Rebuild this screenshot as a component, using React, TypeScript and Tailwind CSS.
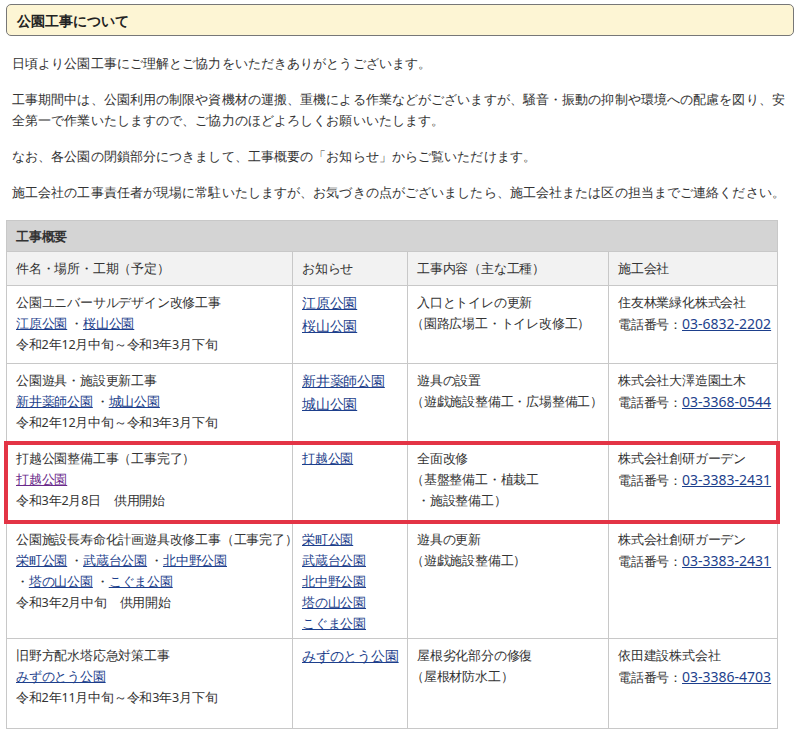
const L = ({ c, v }: { c: string; v?: boolean }) => (
  <a className={`underline ${v ? "text-[#6a2a8a]" : "text-[#1d3f8c]"}`}>{c}</a>
);
const LL = ({ c }: { c: string }) => <a className="underline text-[#1d3f8c] text-[14px] whitespace-nowrap">{c}</a>;

const rows = [
  {
    h: "h-[78px]",
    a: [<div key="1">公園ユニバーサルデザイン改修工事</div>, <div key="2"><L c="江原公園" />&nbsp;・<L c="桜山公園" /></div>, <div key="3">令和2年12月中旬～令和3年3月下旬</div>],
    b: ["江原公園", "桜山公園"],
    c: ["入口とトイレの更新", "（園路広場工・トイレ改修工）"],
    d: ["住友林業緑化株式会社", "03-6832-2202"],
  },
  {
    h: "h-[78px]",
    a: [<div key="1">公園遊具・施設更新工事</div>, <div key="2"><L c="新井薬師公園" />&nbsp;・<L c="城山公園" /></div>, <div key="3">令和2年12月中旬～令和3年3月下旬</div>],
    b: ["新井薬師公園", "城山公園"],
    c: ["遊具の設置", "（遊戯施設整備工・広場整備工）"],
    d: ["株式会社大澤造園土木", "03-3368-0544"],
  },
  {
    h: "h-[81px]",
    a: [<div key="1">打越公園整備工事（工事完了）</div>, <div key="2"><L c="打越公園" v /></div>, <div key="3">令和3年2月8日　供用開始</div>],
    b: ["打越公園"],
    c: ["全面改修", "（基盤整備工・植栽工", "・施設整備工）"],
    d: ["株式会社創研ガーデン", "03-3383-2431"],
  },
  {
    h: "h-[116px]",
    a: [<div key="1" className="whitespace-nowrap">公園施設長寿命化計画遊具改修工事（工事完了）</div>, <div key="2"><L c="栄町公園" />&nbsp;・<L c="武蔵台公園" />&nbsp;・<L c="北中野公園" /></div>, <div key="3">・<L c="塔の山公園" />&nbsp;・<L c="こぐま公園" /></div>, <div key="4">令和3年2月中旬　供用開始</div>],
    b: ["栄町公園", "武蔵台公園", "北中野公園", "塔の山公園", "こぐま公園"],
    c: ["遊具の更新", "（遊戯施設整備工）"],
    d: ["株式会社創研ガーデン", "03-3383-2431"],
  },
  {
    h: "h-[90px]",
    a: [<div key="1">旧野方配水塔応急対策工事</div>, <div key="2"><L c="みずのとう公園" /></div>, <div key="3">令和2年11月中旬～令和3年3月下旬</div>],
    b: ["みずのとう公園"],
    c: ["屋根劣化部分の修復", "（屋根材防水工）"],
    d: ["依田建設株式会社", "03-3386-4703"],
  },
];

export default function App() {
  return (
    <div className="w-[800px] h-[740px] overflow-hidden bg-white text-[#333] font-['Noto_Sans_CJK_JP',sans-serif]">
      <div className="mx-[6px] mt-[4px] h-[32px] rounded-[5px] border border-[#777] bg-[#fdf5d4] flex items-center px-[10px] text-[14px] font-bold text-[#222]">
        公園工事について
      </div>
      <div className="px-[12px] pt-[17px] text-[13.4px] leading-[21px] tracking-[0.1px]">
        <p>日頃より公園工事にご理解とご協力をいただきありがとうございます。</p>
        <p className="mt-[15px]">工事期間中は、公園利用の制限や資機材の運搬、重機による作業などがございますが、騒音・振動の抑制や環境への配慮を図り、安全第一で作業いたしますので、ご協力のほどよろしくお願いいたします。</p>
        <p className="mt-[15px]">なお、各公園の閉鎖部分につきまして、工事概要の「お知らせ」からご覧いただけます。</p>
        <p className="mt-[15px]">施工会社の工事責任者が現場に常駐いたしますが、お気づきの点がございましたら、施工会社または区の担当までご連絡ください。</p>
      </div>
      <div className="relative ml-[6px] mt-[17px] w-[772px]">
        <table className="w-full border-collapse text-[12.6px] leading-[21px] tracking-[-0.2px] table-fixed">
          <colgroup>
            <col className="w-[286px]" />
            <col className="w-[115px]" />
            <col className="w-[201px]" />
            <col />
          </colgroup>
          <tbody>
            <tr className="h-[31px] bg-[#d4d4d4]">
              <td colSpan={4} className="border border-[#c8c8c8] px-[9px] font-bold">工事概要</td>
            </tr>
            <tr className="h-[34px] bg-[#f2f2f2]">
              {["件名・場所・工期（予定）", "お知らせ", "工事内容（主な工種）", "施工会社"].map((t) => (
                <td key={t} className="border border-[#c8c8c8] px-[9px]">{t}</td>
              ))}
            </tr>
            {rows.map((r, i) => (
              <tr key={i} className={r.h}>
                <td className="border border-[#c8c8c8] px-[9px] pt-[6px] align-top">{r.a}</td>
                <td className="border border-[#c8c8c8] px-[9px] pt-[6px] align-top">
                  {r.b.map((x) => (
                    <div key={x} className={i === 2 || i === 3 ? "" : "leading-[22px]"}>{i === 2 || i === 3 ? <L c={x} /> : <LL c={x} />}</div>
                  ))}
                </td>
                <td className="border border-[#c8c8c8] px-[9px] pt-[6px] align-top">
                  {r.c.map((x, j) => <div key={j} className={j > 0 && x.startsWith("（") ? "-ml-[6px] whitespace-nowrap" : "whitespace-nowrap"}>{x}</div>)}
                </td>
                <td className="border border-[#c8c8c8] px-[9px] pt-[6px] align-top">
                  <div className="whitespace-nowrap">{r.d[0]}</div>
                  <div className="whitespace-nowrap">電話番号：<a className="underline text-[#1d3f8c] text-[14px] tracking-[0px]">{r.d[1]}</a></div>
                </td>
              </tr>
            ))}
          </tbody>
        </table>
        <div className="absolute left-[-2px] top-[221px] w-[776px] h-[83px] border-[4px] border-[#e33445] pointer-events-none" />
      </div>
    </div>
  );
}
